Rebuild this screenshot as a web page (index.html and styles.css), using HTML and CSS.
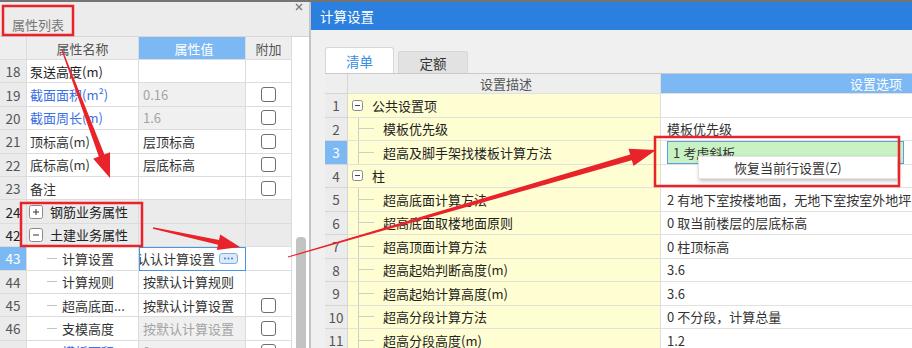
FILE: index.html
```html
<!DOCTYPE html>
<html lang="zh-CN">
<head>
  <meta charset="UTF-8">
  <meta name="viewport" content="width=device-width, initial-scale=1.0">
  <title>计算设置</title>
  <link rel="stylesheet" href="styles.css">
</head>
<body>
  <div class="topline"></div>
  <div class="screen">
    <div class="props">
      <div class="props-bar">
        <svg class="close" width="8" height="8"><path d="M1 1l6 6M7 1l-6 6" stroke="#7a7a7a" stroke-width="1.4"/></svg>
      </div>
      <div class="props-title">属性列表</div>
      <div class="props-body">
        <div class="pgrid">
          <div class="prow head">
            <div class="pc num"></div>
            <div class="pc name center">属性名称</div>
            <div class="pc val hl center">属性值</div>
            <div class="pc add">附加</div>
          </div>
          <div class="prow">
            <div class="pc num">18</div>
            <div class="pc name dark">泵送高度(m)</div>
            <div class="pc val"></div>
            <div class="pc add"></div>
          </div>
          <div class="prow">
            <div class="pc num">19</div>
            <div class="pc name blue">截面面积(m²)</div>
            <div class="pc val off">0.16</div>
            <div class="pc add"><span class="chk"></span></div>
          </div>
          <div class="prow">
            <div class="pc num">20</div>
            <div class="pc name blue">截面周长(m)</div>
            <div class="pc val off">1.6</div>
            <div class="pc add"><span class="chk"></span></div>
          </div>
          <div class="prow">
            <div class="pc num">21</div>
            <div class="pc name">顶标高(m)</div>
            <div class="pc val">层顶标高</div>
            <div class="pc add"><span class="chk"></span></div>
          </div>
          <div class="prow">
            <div class="pc num">22</div>
            <div class="pc name">底标高(m)</div>
            <div class="pc val">层底标高</div>
            <div class="pc add"><span class="chk"></span></div>
          </div>
          <div class="prow">
            <div class="pc num">23</div>
            <div class="pc name">备注</div>
            <div class="pc val"></div>
            <div class="pc add"><span class="chk"></span></div>
          </div>
          <div class="prow group">
            <div class="pc num">24</div>
            <div class="pc name">
              <svg class="pbox" width="14" height="14"><rect x="0.5" y="0.5" width="13" height="13" rx="2" fill="#fff" stroke="#8a8a8a"/><path d="M4 7h6M7 4v6" stroke="#333"/></svg>
              钢筋业务属性
            </div>
            <div class="pc val"></div>
            <div class="pc add"></div>
          </div>
          <div class="prow group">
            <div class="pc num">42</div>
            <div class="pc name">
              <svg class="pbox" width="14" height="14"><rect x="0.5" y="0.5" width="13" height="13" rx="2" fill="#fff" stroke="#8a8a8a"/><path d="M4 7h6" stroke="#333"/></svg>
              土建业务属性
            </div>
            <div class="pc val"></div>
            <div class="pc add"></div>
          </div>
          <div class="prow">
            <div class="pc num sel">43</div>
            <div class="pc name"><span class="ptree"></span>计算设置</div>
            <div class="pc val editing">
              <span class="clip">认认计算设置</span>
              <svg class="more" width="19" height="11"><rect x="0.5" y="0.5" width="18" height="10" rx="2.5" fill="#dce9f8" stroke="#7eaee6"/><circle cx="6" cy="5.5" r="1" fill="#3d7fd6"/><circle cx="9.5" cy="5.5" r="1" fill="#3d7fd6"/><circle cx="13" cy="5.5" r="1" fill="#3d7fd6"/></svg>
            </div>
            <div class="pc add"></div>
          </div>
          <div class="prow">
            <div class="pc num">44</div>
            <div class="pc name"><span class="ptree"></span>计算规则</div>
            <div class="pc val">按默认计算规则</div>
            <div class="pc add"></div>
          </div>
          <div class="prow">
            <div class="pc num">45</div>
            <div class="pc name"><span class="ptree"></span>超高底面...</div>
            <div class="pc val">按默认计算设置</div>
            <div class="pc add"><span class="chk"></span></div>
          </div>
          <div class="prow">
            <div class="pc num">46</div>
            <div class="pc name"><span class="ptree"></span>支模高度</div>
            <div class="pc val off">按默认计算设置</div>
            <div class="pc add"><span class="chk"></span></div>
          </div>
          <div class="prow">
            <div class="pc num">47</div>
            <div class="pc name blue"><span class="ptree"></span>模板面积</div>
            <div class="pc val off">0</div>
            <div class="pc add"><span class="chk"></span></div>
          </div>
        </div>
        <div class="scroll"><div class="thumb"></div></div>
      </div>
    </div>

    <div class="dialog">
      <div class="dlg-title">计算设置</div>
      <div class="dlg-body">
        <div class="tabs">
          <div class="tab on">清单</div>
          <div class="tab">定额</div>
        </div>
        <div class="stable">
          <div class="srow head">
            <div class="sc num"></div>
            <div class="sc desc center">设置描述</div>
            <div class="sc opt hl center">设置选项</div>
          </div>
          <div class="srow">
            <div class="sc num">1</div>
            <div class="sc desc">
              <svg class="sbox" width="11" height="11"><rect x="0.5" y="0.5" width="10" height="10" rx="2" fill="#fff" stroke="#8a8a8a"/><path d="M3 5.5h5" stroke="#444"/></svg>
              公共设置项
            </div>
            <div class="sc opt"></div>
          </div>
          <div class="srow">
            <div class="sc num">2</div>
            <div class="sc desc"><span class="stree"></span>模板优先级</div>
            <div class="sc opt">模板优先级</div>
          </div>
          <div class="srow">
            <div class="sc num sel">3</div>
            <div class="sc desc"><span class="stree"></span>超高及脚手架找楼板计算方法</div>
            <div class="sc opt menu-host">
              <div class="edit">1 考虑斜板</div>
              <div class="ctx">恢复当前行设置(Z)</div>
            </div>
          </div>
          <div class="srow">
            <div class="sc num">4</div>
            <div class="sc desc">
              <svg class="sbox" width="11" height="11"><rect x="0.5" y="0.5" width="10" height="10" rx="2" fill="#fff" stroke="#8a8a8a"/><path d="M3 5.5h5" stroke="#444"/></svg>
              柱
            </div>
            <div class="sc opt"></div>
          </div>
          <div class="srow">
            <div class="sc num">5</div>
            <div class="sc desc"><span class="stree"></span>超高底面计算方法</div>
            <div class="sc opt">2 有地下室按楼地面，无地下室按室外地坪</div>
          </div>
          <div class="srow">
            <div class="sc num">6</div>
            <div class="sc desc"><span class="stree"></span>超高底面取楼地面原则</div>
            <div class="sc opt">0 取当前楼层的层底标高</div>
          </div>
          <div class="srow">
            <div class="sc num">7</div>
            <div class="sc desc"><span class="stree"></span>超高顶面计算方法</div>
            <div class="sc opt">0 柱顶标高</div>
          </div>
          <div class="srow">
            <div class="sc num">8</div>
            <div class="sc desc"><span class="stree"></span>超高起始判断高度(m)</div>
            <div class="sc opt">3.6</div>
          </div>
          <div class="srow">
            <div class="sc num">9</div>
            <div class="sc desc"><span class="stree"></span>超高起始计算高度(m)</div>
            <div class="sc opt">3.6</div>
          </div>
          <div class="srow">
            <div class="sc num">10</div>
            <div class="sc desc"><span class="stree"></span>超高分段计算方法</div>
            <div class="sc opt">0 不分段，计算总量</div>
          </div>
          <div class="srow">
            <div class="sc num">11</div>
            <div class="sc desc"><span class="stree"></span>超高分段高度(m)</div>
            <div class="sc opt">1.2</div>
          </div>
        </div>
      </div>
    </div>
  </div>

  <!-- red annotations drawn over the screenshot -->
  <svg class="marks" width="912" height="348">
    <g fill="none" stroke="#e8232a" stroke-width="2.5">
      <rect x="3" y="6" width="70" height="29"/>
      <rect x="21" y="203" width="121" height="43"/>
      <rect x="655" y="137" width="244" height="49"/>
    </g>
    <g fill="#e8232a">
      <polygon points="62.5,49.8 104.4,154.4 110,152.3 110,178 93.2,158.7 98.8,156.6 61.5,50.2"/>
      <polygon points="153.2,227.2 219,239.9 220.2,234.5 240,247 216.8,250.1 218,244.7 152.8,228.8"/>
      <polygon points="288.1,257.5 631.8,160.2 633.5,165.9 656,150 628.5,148.7 630.2,154.4 287.9,256.5"/>
    </g>
  </svg>
</body>
</html>
```

FILE: styles.css
```css
* {
  box-sizing: border-box;
}
html, body {
  margin: 0;
}
body {
  position: relative;
  width: 912px;
  height: 348px;
  overflow: hidden;
  background: #f0f0f0;
  font-family: "Noto Sans CJK SC", "Noto Sans", sans-serif;
  font-size: 13px;
  color: #333;
}
.topline {
  height: 2px;
  background: #747474;
}
.screen {
  display: flex;
  height: 346px;
}

/* left: property list */
.props {
  width: 311px;
  display: flex;
  flex-direction: column;
  background: #ececec;
  border-right: 2px solid #c4c4c4;
}
.props-bar {
  height: 10px;
  display: flex;
  align-items: center;
  justify-content: flex-end;
  padding-right: 6px;
}
.props-title {
  height: 25px;
  line-height: 25px;
  padding-left: 12px;
  color: #777;
  border-bottom: 1px solid #d6d6d6;
}
.props-body {
  flex: 1;
  display: flex;
  background: #fff;
  overflow: hidden;
}
.pgrid {
  width: 292px;
}
.prow {
  display: grid;
  grid-template-columns: 27px 112px 107px 46px;
  height: 23.4px;
}
.prow.head {
  height: 23px;
}
.pc {
  display: flex;
  align-items: center;
  padding-left: 3px;
  white-space: nowrap;
  overflow: hidden;
  border-right: 1px solid #dcdcdc;
  border-bottom: 1px solid #dcdcdc;
  color: #333;
}
.pc.num {
  justify-content: center;
  padding-left: 0;
  background: #ebebeb;
  color: #555;
  font-size: 13.5px;
}
.pc.val {
  padding-left: 4px;
}
.pc.add {
  justify-content: center;
  padding-left: 0;
}
.prow.head .pc {
  background: #eeeeee;
  color: #555;
}
.prow.head .pc.hl,
.pc.sel {
  background: #7cb9f4;
  color: #fff;
}
.center {
  justify-content: center;
  padding-left: 0;
}
.dark {
  color: #1e1e1e;
}
.blue {
  color: #3b6fe3;
}
.pc.off {
  background: #f0f0f0;
  color: #a4a4a4;
}
.prow.group .pc {
  background: #ebebeb;
  color: #222;
}
.pbox {
  margin: 0 7px 0 -1px;
  flex: none;
}
.ptree {
  width: 10px;
  margin: 0 5px 0 17px;
  border-top: 1px solid #c4c4c4;
  flex: none;
}
.chk {
  width: 15px;
  height: 15px;
  border: 1px solid #6e6e6e;
  border-radius: 3px;
  background: #fff;
}
.pc.editing {
  border: 1px solid #4a94e6;
  padding-left: 3px;
}
.clip {
  margin-left: -6px;
}
.more {
  margin-left: 4px;
  flex: none;
}
.scroll {
  width: 10px;
  margin-left: 4px;
  padding-top: 200px;
}
.thumb {
  height: 130px;
  background: #c3c3c3;
  border-radius: 4px;
}

/* right: settings dialog */
.dialog {
  flex: 1;
  overflow: hidden;
  background: #f0f0f0;
}
.dlg-title {
  height: 28px;
  line-height: 28px;
  padding-left: 9px;
  background: #2b7fde;
  color: #fff;
  font-size: 13.5px;
}
.dlg-body {
  padding: 17px 0 0 14px;
}
.tabs {
  display: flex;
  align-items: flex-end;
  gap: 4px;
  height: 26px;
}
.tab {
  width: 70px;
  height: 22px;
  display: flex;
  align-items: center;
  justify-content: center;
  background: #e2e2e2;
  border: 1px solid #d6d6d6;
  border-bottom: none;
  border-radius: 3px 3px 0 0;
  font-size: 13.5px;
}
.tab.on {
  width: 69px;
  height: 26px;
  background: #fff;
  color: #3a8de6;
}
.stable {
  width: 760px;
  border-top: 1px solid #c9c9c9;
}
.srow {
  display: grid;
  grid-template-columns: 23px 313px 424px;
  height: 23.5px;
}
.srow.head {
  height: 20px;
}
.sc {
  display: flex;
  align-items: center;
  white-space: nowrap;
  border-right: 1px solid #dedede;
  border-bottom: 1px solid #e2e2dc;
}
.sc.num {
  justify-content: center;
  background: #ececec;
  color: #555;
  font-size: 13.5px;
  border-color: #d6d6d6;
}
.sc.num.sel {
  background: #7cb9f4;
  color: #fff;
}
.sc.desc {
  padding-left: 4px;
  background: #fffed2;
  color: #222;
}
.sc.opt {
  padding-left: 6px;
  background: #fff;
  border-right: none;
  color: #333;
}
.srow.head .sc {
  background: #eeeeee;
  color: #555;
}
.srow.head .sc.hl {
  background: #7cb9f4;
  color: #fff;
}
.sbox {
  margin-right: 9px;
  flex: none;
}
.stree {
  align-self: stretch;
  width: 16px;
  margin: 0 9px 0 6px;
  flex: none;
  background:
    linear-gradient(#cfcfc4, #cfcfc4) no-repeat left top / 1px 100%,
    linear-gradient(#cfcfc4, #cfcfc4) no-repeat left center / 100% 1px;
}
.menu-host {
  position: relative;
  padding-left: 0;
}
.edit {
  width: 237px;
  height: 100%;
  display: flex;
  align-items: center;
  padding-left: 5px;
  background: #c9f2c4;
  border: 1px solid #5a9fe6;
}
.ctx {
  position: absolute;
  left: 37px;
  top: 15px;
  z-index: 2;
  width: 200px;
  height: 23px;
  line-height: 21px;
  padding-left: 35px;
  background: #fff;
  border: 1px solid #e2e2e2;
  box-shadow: 1px 2px 4px rgba(0, 0, 0, 0.25);
  color: #333;
}
.marks {
  position: absolute;
  left: 0;
  top: 0;
  z-index: 5;
  pointer-events: none;
}
```
